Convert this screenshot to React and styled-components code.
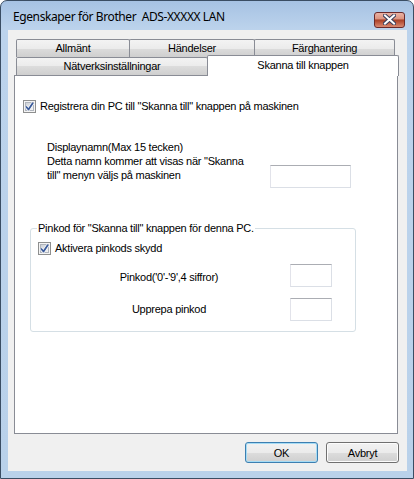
import React from 'react'
import styled, { createGlobalStyle } from 'styled-components'

const Global = createGlobalStyle`
  html, body { margin: 0; padding: 0; background: #ffffff; }
  body { width: 414px; height: 479px; overflow: hidden; }
`

const Window = styled.div`
  box-sizing: border-box;
  width: 414px;
  height: 479px;
  border: 1px solid #3a4d63;
  border-radius: 7px 7px 0 0;
  background: linear-gradient(180deg, #a6c2e3 0px, #bcd3ec 28px, #b9d1ea 100%);
  padding: 0 6px 7px 7px;
  display: flex;
  flex-direction: column;
  font-family: "Liberation Sans", Arial, sans-serif;
  font-size: 11px;
  letter-spacing: -0.25px;
  color: #000;
`

const TitleBar = styled.div`
  height: 29px;
  display: flex;
  align-items: center;
  justify-content: space-between;
  padding: 0 2px 0 5px;
`

const Title = styled.span`
  font-family: "Noto Sans", "Open Sans", sans-serif;
  font-size: 12px;
  letter-spacing: -0.4px;
  color: #000;
  padding-top: 2px;
`

const CloseButton = styled.div`
  box-sizing: border-box;
  width: 31px;
  height: 16px;
  margin-top: 8px;
  border: 1px solid #6b2a2a;
  border-radius: 3px;
  background: linear-gradient(180deg, #eab2a4 0%, #dc9480 42%, #a8432a 50%, #b24a30 58%, #d98a72 100%);
  display: flex;
  align-items: center;
  justify-content: center;
`

const Client = styled.div`
  flex: 1;
  background: #f0f0f0;
  padding: 9px 8px 0 6px;
  display: flex;
  flex-direction: column;
`

const TabStrip = styled.div`
  padding-left: 2px;
  display: flex;
  flex-direction: column;
`

const TabRow = styled.div`
  display: flex;
  height: 18px;
  align-items: flex-start;
`

const Tab = styled.div`
  box-sizing: border-box;
  width: ${p => p.$w}px;
  height: ${p => (p.$active ? 21 : 18)}px;
  margin-left: ${p => (p.$first ? 0 : -1)}px;
  margin-top: ${p => (p.$active ? -2 : 0)}px;
  border: 1px solid #898c95;
  border-bottom: none;
  border-radius: 2px 2px 0 0;
  background: ${p => (p.$active
    ? '#ffffff'
    : 'linear-gradient(180deg, #f3f3f3 0%, #ebebeb 50%, #dcdcdc 50%, #cfcfcf 100%)')};
  position: ${p => (p.$active ? 'relative' : 'static')};
  z-index: ${p => (p.$active ? 1 : 'auto')};
  display: flex;
  align-items: ${p => (p.$active ? 'flex-start' : 'center')};
  padding-top: ${p => (p.$active ? 3 : 0)}px;
  justify-content: center;
  line-height: 13px;
`

const Panel = styled.div`
  box-sizing: border-box;
  width: 384px;
  height: 359px;
  background: #ffffff;
  border: 1px solid #898c95;
  padding: 23px 0 0 8px;
  display: flex;
  flex-direction: column;
`

const CheckRow = styled.label`
  display: flex;
  align-items: center;
  gap: 4px;
  height: 14px;
  line-height: 13px;
`

const DisplaySection = styled.div`
  display: flex;
  align-items: flex-start;
  margin: 27px 0 0 24px;
`

const DisplayText = styled.div`
  width: 223px;
  line-height: 14px;
`

const TextBox = styled.div`
  box-sizing: border-box;
  width: ${p => p.$w}px;
  height: 23px;
  background: #ffffff;
  border: 1px solid #dbdfe6;
  border-top-color: #abadb3;
  border-left-color: #e2e3ea;
`

const NameBox = styled(TextBox)`
  margin-top: 25px;
`

const GroupBox = styled.fieldset`
  box-sizing: border-box;
  width: 326px;
  margin: 34px 0 0 7px;
  padding: 0 7px 10px 7px;
  border: 1px solid #d5dfe5;
  border-radius: 3px;
  min-inline-size: 0;
`

const Legend = styled.legend`
  padding: 0 1px;
  margin-left: -1px;
  line-height: 13px;
`

const GroupCheck = styled(CheckRow)`
  margin-top: 6px;
`

const PinGrid = styled.div`
  display: grid;
  grid-template-columns: 200px 42px;
  column-gap: 21px;
  row-gap: 11px;
  align-items: center;
  margin: 9px 0 0 31px;
`

const PinLabel = styled.div`
  text-align: center;
  line-height: 13px;
  padding-top: ${p => p.$drop || 0}px;
`

const Footer = styled.div`
  display: flex;
  justify-content: flex-end;
  gap: 8px;
  margin-top: 8px;
`

const Button = styled.div`
  box-sizing: border-box;
  width: 73px;
  height: 21px;
  border: 1px solid ${p => (p.$default ? '#3c7fb1' : '#707070')};
  border-radius: 3px;
  box-shadow: ${p => (p.$default ? 'inset 0 0 0 1px #a6dcf5' : 'inset 0 0 0 1px #fcfcfc')};
  background: linear-gradient(180deg, #f2f2f2 0%, #ebebeb 50%, #dddddd 50%, #cfcfcf 100%);
  display: flex;
  align-items: center;
  justify-content: center;
`

function CheckBox() {
  return (
    <svg width="13" height="13" viewBox="0 0 13 13">
      <defs>
        <linearGradient id="cbg" x1="0" y1="0" x2="1" y2="1">
          <stop offset="0" stopColor="#cbcfd5" />
          <stop offset="1" stopColor="#f6f6f6" />
        </linearGradient>
      </defs>
      <rect x="0.5" y="0.5" width="12" height="12" fill="#f4f4f4" stroke="#8e8f8f" />
      <rect x="2.5" y="2.5" width="8" height="8" fill="url(#cbg)" stroke="#b0b5bd" />
      <path d="M3 6.5 L5.5 9.5 L10 2.8" fill="none" stroke="#ffffff" strokeWidth="3" strokeLinejoin="round" />
      <path d="M3 6.5 L5.5 9.5 L10 2.8" fill="none" stroke="#3a5a9a" strokeWidth="1.8" strokeLinejoin="round" />
    </svg>
  )
}

function CloseGlyph() {
  return (
    <svg width="13" height="11" viewBox="0 0 13 11">
      <path d="M2 1.5 L11 9.5 M11 1.5 L2 9.5" stroke="#3a3f5c" strokeWidth="4" strokeLinecap="square" />
      <path d="M2 1.5 L11 9.5 M11 1.5 L2 9.5" stroke="#ffffff" strokeWidth="2" strokeLinecap="square" />
    </svg>
  )
}

export default function App() {
  return (
    <>
      <Global />
      <Window>
        <TitleBar>
          <Title>Egenskaper för Brother&nbsp; ADS-XXXXX LAN</Title>
          <CloseButton><CloseGlyph /></CloseButton>
        </TitleBar>
        <Client>
          <TabStrip>
            <TabRow>
              <Tab $w={114} $first>Allmänt</Tab>
              <Tab $w={126}>Händelser</Tab>
              <Tab $w={141}>Färghantering</Tab>
            </TabRow>
            <TabRow>
              <Tab $w={192} $first>Nätverksinställningar</Tab>
              <Tab $w={192} $active>Skanna till knappen</Tab>
            </TabRow>
          </TabStrip>
          <Panel>
            <CheckRow>
              <CheckBox />
              <span>Registrera din PC till "Skanna till" knappen på maskinen</span>
            </CheckRow>
            <DisplaySection>
              <DisplayText>
                Displaynamn(Max 15 tecken)<br />
                Detta namn kommer att visas när "Skanna<br />
                till" menyn väljs på maskinen
              </DisplayText>
              <NameBox $w={81} />
            </DisplaySection>
            <GroupBox>
              <Legend>Pinkod för "Skanna till" knappen för denna PC.</Legend>
              <GroupCheck>
                <CheckBox />
                <span>Aktivera pinkods skydd</span>
              </GroupCheck>
              <PinGrid>
                <PinLabel $drop={3}>Pinkod('0'-'9',4 siffror)</PinLabel>
                <TextBox $w={42} />
                <PinLabel>Upprepa pinkod</PinLabel>
                <TextBox $w={42} />
              </PinGrid>
            </GroupBox>
          </Panel>
          <Footer>
            <Button $default>OK</Button>
            <Button>Avbryt</Button>
          </Footer>
        </Client>
      </Window>
    </>
  )
}
